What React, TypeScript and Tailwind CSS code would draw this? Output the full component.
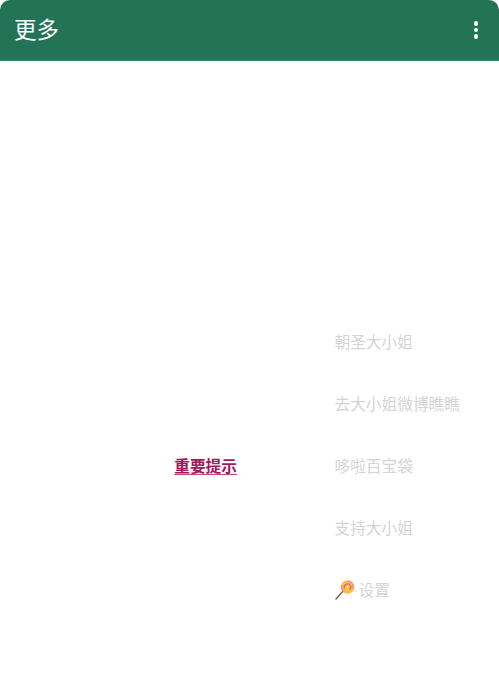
import React from 'react';

const links = ['朝圣大小姐', '去大小姐微博瞧瞧', '哆啦百宝袋', '支持大小姐'];

const Lollipop: React.FC = () => (
  <svg width="20" height="20" viewBox="0 0 20 20" className="shrink-0">
    <line x1="1" y1="19" x2="8.5" y2="10.5" stroke="#7a5c50" strokeWidth="1.4" strokeLinecap="round" />
    <circle cx="12.5" cy="7" r="6.8" fill="#fbbf3c" />
    <path d="M12.5 1.2a5.8 5.8 0 0 1 5.6 7.2M7 5a5.8 5.8 0 0 0 2.2 6.6" fill="none" stroke="#ee82a8" strokeWidth="1.3" />
    <path d="M9.6 8.4a3.2 3.2 0 1 1 5 1.2" fill="none" stroke="#e0609e" strokeWidth="1.3" />
    <circle cx="12.5" cy="7" r="1" fill="#fff0b0" />
  </svg>
);

export default function App() {
  return (
    <div className="h-[683px] w-full bg-white font-['Noto_Sans_CJK_SC','Liberation_Sans',sans-serif]">
      <header className="flex h-[61px] items-center justify-between rounded-t-[10px] border-b border-[#2f8a6a] bg-[#237357] pl-[14px] pr-[21px]">
        <h1 className="pb-[2px] text-[22.5px] font-normal text-white">更多</h1>
        <div className="flex flex-col gap-[2px]">
          <span className="h-[4.5px] w-[4.5px] rounded-full bg-white" />
          <span className="h-[4.5px] w-[4.5px] rounded-full bg-white" />
          <span className="h-[4.5px] w-[4.5px] rounded-full bg-white" />
        </div>
      </header>

      <main className="flex items-center pt-[250px]">
        <div className="flex w-[334.5px] justify-end pr-[97.5px]">
          <a className="text-[15.7px] font-bold leading-[20px] text-[#a3195b] underline decoration-[#c9457f] underline-offset-2">重要提示</a>
        </div>
        <ul className="flex flex-col text-[15.7px] text-[#d4d4d4]">
          {links.map((label) => (
            <li key={label} className="flex h-[62px] items-center">{label}</li>
          ))}
          <li className="flex h-[62px] items-center gap-[4px]">
            <Lollipop />
            <span>设置</span>
          </li>
        </ul>
      </main>
    </div>
  );
}
